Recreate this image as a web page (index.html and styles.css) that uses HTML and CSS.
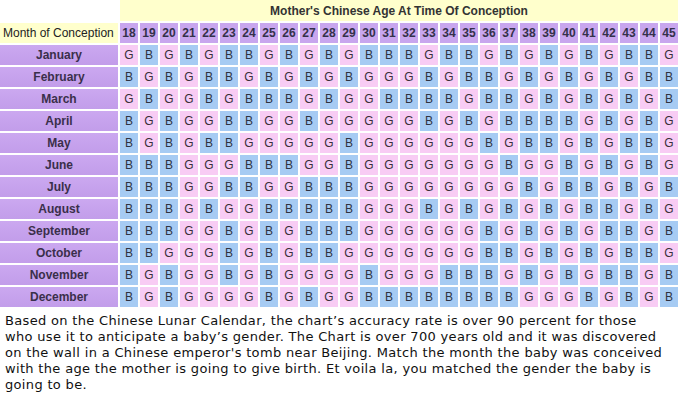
FILE: index.html
```html
<!DOCTYPE html>
<html>
<head>
<meta charset="utf-8">
<link rel="stylesheet" href="styles.css">
</head>
<body>
<div class="chart">
<div class="blank"></div>
<div class="title">Mother's Chinese Age At Time Of Conception</div>
<div class="label">Month of Conception</div>
<div class="age">18</div><div class="age">19</div><div class="age">20</div><div class="age">21</div><div class="age">22</div><div class="age">23</div><div class="age">24</div><div class="age">25</div><div class="age">26</div><div class="age">27</div><div class="age">28</div><div class="age">29</div><div class="age">30</div><div class="age">31</div><div class="age">32</div><div class="age">33</div><div class="age">34</div><div class="age">35</div><div class="age">36</div><div class="age">37</div><div class="age">38</div><div class="age">39</div><div class="age">40</div><div class="age">41</div><div class="age">42</div><div class="age">43</div><div class="age">44</div><div class="age">45</div>

<div class="month">January</div>
<div class="g">G</div><div class="b">B</div><div class="g">G</div><div class="b">B</div><div class="g">G</div><div class="b">B</div><div class="b">B</div><div class="g">G</div><div class="b">B</div><div class="g">G</div><div class="b">B</div><div class="g">G</div><div class="b">B</div><div class="b">B</div><div class="b">B</div><div class="g">G</div><div class="b">B</div><div class="b">B</div><div class="g">G</div><div class="b">B</div><div class="g">G</div><div class="b">B</div><div class="g">G</div><div class="b">B</div><div class="g">G</div><div class="b">B</div><div class="b">B</div><div class="g">G</div>

<div class="month">February</div>
<div class="b">B</div><div class="g">G</div><div class="b">B</div><div class="g">G</div><div class="b">B</div><div class="b">B</div><div class="g">G</div><div class="b">B</div><div class="g">G</div><div class="b">B</div><div class="g">G</div><div class="b">B</div><div class="g">G</div><div class="g">G</div><div class="g">G</div><div class="b">B</div><div class="g">G</div><div class="b">B</div><div class="b">B</div><div class="g">G</div><div class="b">B</div><div class="g">G</div><div class="b">B</div><div class="g">G</div><div class="b">B</div><div class="g">G</div><div class="b">B</div><div class="b">B</div>

<div class="month">March</div>
<div class="g">G</div><div class="b">B</div><div class="g">G</div><div class="g">G</div><div class="b">B</div><div class="g">G</div><div class="b">B</div><div class="b">B</div><div class="b">B</div><div class="g">G</div><div class="b">B</div><div class="g">G</div><div class="g">G</div><div class="b">B</div><div class="b">B</div><div class="b">B</div><div class="b">B</div><div class="g">G</div><div class="b">B</div><div class="b">B</div><div class="g">G</div><div class="b">B</div><div class="g">G</div><div class="b">B</div><div class="g">G</div><div class="b">B</div><div class="g">G</div><div class="b">B</div>

<div class="month">April</div>
<div class="b">B</div><div class="g">G</div><div class="b">B</div><div class="g">G</div><div class="g">G</div><div class="b">B</div><div class="b">B</div><div class="g">G</div><div class="g">G</div><div class="b">B</div><div class="g">G</div><div class="g">G</div><div class="g">G</div><div class="g">G</div><div class="g">G</div><div class="b">B</div><div class="g">G</div><div class="b">B</div><div class="g">G</div><div class="b">B</div><div class="b">B</div><div class="b">B</div><div class="b">B</div><div class="g">G</div><div class="b">B</div><div class="g">G</div><div class="b">B</div><div class="g">G</div>

<div class="month">May</div>
<div class="b">B</div><div class="g">G</div><div class="b">B</div><div class="g">G</div><div class="b">B</div><div class="b">B</div><div class="g">G</div><div class="g">G</div><div class="g">G</div><div class="g">G</div><div class="g">G</div><div class="b">B</div><div class="g">G</div><div class="g">G</div><div class="g">G</div><div class="g">G</div><div class="g">G</div><div class="g">G</div><div class="b">B</div><div class="g">G</div><div class="b">B</div><div class="b">B</div><div class="g">G</div><div class="b">B</div><div class="g">G</div><div class="b">B</div><div class="b">B</div><div class="g">G</div>

<div class="month">June</div>
<div class="b">B</div><div class="b">B</div><div class="b">B</div><div class="g">G</div><div class="g">G</div><div class="g">G</div><div class="b">B</div><div class="b">B</div><div class="b">B</div><div class="g">G</div><div class="g">G</div><div class="b">B</div><div class="g">G</div><div class="g">G</div><div class="g">G</div><div class="g">G</div><div class="g">G</div><div class="g">G</div><div class="g">G</div><div class="b">B</div><div class="g">G</div><div class="g">G</div><div class="b">B</div><div class="g">G</div><div class="b">B</div><div class="g">G</div><div class="b">B</div><div class="g">G</div>

<div class="month">July</div>
<div class="b">B</div><div class="b">B</div><div class="b">B</div><div class="g">G</div><div class="g">G</div><div class="b">B</div><div class="b">B</div><div class="g">G</div><div class="g">G</div><div class="b">B</div><div class="b">B</div><div class="b">B</div><div class="g">G</div><div class="g">G</div><div class="g">G</div><div class="g">G</div><div class="g">G</div><div class="g">G</div><div class="g">G</div><div class="g">G</div><div class="b">B</div><div class="g">G</div><div class="b">B</div><div class="b">B</div><div class="g">G</div><div class="b">B</div><div class="g">G</div><div class="b">B</div>

<div class="month">August</div>
<div class="b">B</div><div class="b">B</div><div class="b">B</div><div class="g">G</div><div class="b">B</div><div class="g">G</div><div class="g">G</div><div class="b">B</div><div class="b">B</div><div class="b">B</div><div class="b">B</div><div class="b">B</div><div class="g">G</div><div class="g">G</div><div class="g">G</div><div class="b">B</div><div class="g">G</div><div class="b">B</div><div class="g">G</div><div class="b">B</div><div class="g">G</div><div class="b">B</div><div class="g">G</div><div class="b">B</div><div class="b">B</div><div class="g">G</div><div class="b">B</div><div class="g">G</div>

<div class="month">September</div>
<div class="b">B</div><div class="b">B</div><div class="b">B</div><div class="g">G</div><div class="g">G</div><div class="b">B</div><div class="g">G</div><div class="b">B</div><div class="g">G</div><div class="b">B</div><div class="b">B</div><div class="b">B</div><div class="g">G</div><div class="g">G</div><div class="g">G</div><div class="g">G</div><div class="g">G</div><div class="g">G</div><div class="b">B</div><div class="g">G</div><div class="b">B</div><div class="g">G</div><div class="b">B</div><div class="g">G</div><div class="b">B</div><div class="b">B</div><div class="g">G</div><div class="b">B</div>

<div class="month">October</div>
<div class="b">B</div><div class="b">B</div><div class="g">G</div><div class="g">G</div><div class="g">G</div><div class="b">B</div><div class="g">G</div><div class="b">B</div><div class="g">G</div><div class="b">B</div><div class="b">B</div><div class="g">G</div><div class="g">G</div><div class="g">G</div><div class="g">G</div><div class="g">G</div><div class="g">G</div><div class="g">G</div><div class="b">B</div><div class="b">B</div><div class="g">G</div><div class="b">B</div><div class="g">G</div><div class="b">B</div><div class="g">G</div><div class="b">B</div><div class="b">B</div><div class="g">G</div>

<div class="month">November</div>
<div class="b">B</div><div class="g">G</div><div class="b">B</div><div class="g">G</div><div class="g">G</div><div class="b">B</div><div class="g">G</div><div class="b">B</div><div class="g">G</div><div class="g">G</div><div class="g">G</div><div class="g">G</div><div class="b">B</div><div class="g">G</div><div class="g">G</div><div class="g">G</div><div class="b">B</div><div class="b">B</div><div class="b">B</div><div class="g">G</div><div class="b">B</div><div class="g">G</div><div class="b">B</div><div class="g">G</div><div class="b">B</div><div class="b">B</div><div class="g">G</div><div class="b">B</div>

<div class="month">December</div>
<div class="b">B</div><div class="g">G</div><div class="b">B</div><div class="g">G</div><div class="g">G</div><div class="g">G</div><div class="g">G</div><div class="b">B</div><div class="g">G</div><div class="b">B</div><div class="g">G</div><div class="g">G</div><div class="b">B</div><div class="b">B</div><div class="b">B</div><div class="b">B</div><div class="b">B</div><div class="b">B</div><div class="b">B</div><div class="b">B</div><div class="g">G</div><div class="g">G</div><div class="g">G</div><div class="b">B</div><div class="g">G</div><div class="b">B</div><div class="g">G</div><div class="b">B</div>
</div>
<p class="note">Based on the Chinese Lunar Calendar, the chart’s accuracy rate is over 90 percent for those<br>who use it to anticipate a baby’s gender. The Chart is over 700 years old and it was discovered<br>on the wall in a Chinese emperor's tomb near Beijing. Match the month the baby was conceived<br>with the age the mother is going to give birth. Et voila la, you matched the gender the baby is<br>going to be.</p>
</body>
</html>
```

FILE: styles.css
```css
html, body {
  margin: 0;
  padding: 0;
  background: #ffffff;
}

.chart {
  display: grid;
  grid-template-columns: 118px repeat(28, 18px);
  grid-template-rows: 21px repeat(13, 20px);
  gap: 2px;
  width: 678px;
  font-family: "Liberation Sans", Arial, sans-serif;
  font-size: 12px;
  color: #333333;
}

.chart > div {
  display: flex;
  align-items: center;
  justify-content: center;
}

.title {
  grid-column: 2 / span 28;
  background: #ffffcc;
  font-weight: bold;
  font-size: 12px;
  color: #333333;
}

.label {
  background: #ffffcc;
  color: #222222;
  font-size: 12px;
  white-space: nowrap;
}

.chart > .label {
  justify-content: flex-start;
  padding-left: 3px;
}

.age {
  background: #c8a6ee;
  font-weight: bold;
  color: #33304a;
}

.month {
  background: linear-gradient(#cba8f0, #c29dea);
  font-weight: bold;
  color: #3a2f4a;
}

.b {
  background: #a6cbf3;
  color: #2f3340;
}

.g {
  background: #f8ccf4;
  color: #3a2f3a;
}

.note {
  margin: 6px 0 0 0;
  padding-left: 5px;
  font-family: "DejaVu Sans", Verdana, sans-serif;
  font-size: 13px;
  letter-spacing: 0.33px;
  line-height: 16px;
  color: #111111;
  white-space: nowrap;
}
```
